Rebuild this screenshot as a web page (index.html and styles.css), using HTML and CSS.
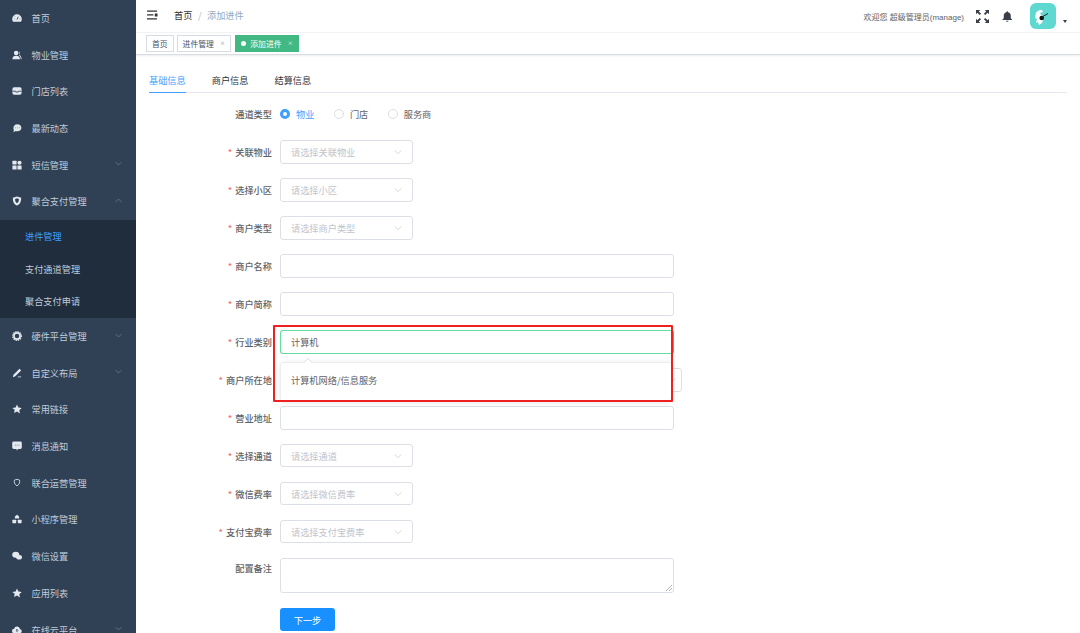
FILE: index.html
```html
<!DOCTYPE html>
<html lang="zh-CN">
<head>
<meta charset="utf-8">
<title>添加进件</title>
<link rel="stylesheet" href="styles.css">
</head>
<body>
<div class="app">
  <aside class="sidebar">
    <div class="menu-item"><svg class="ico" viewBox="0 0 24 24"><path d="M12 3A11.5 11.5 0 0 0 .5 14.500c0 2.300.7 4.500 1.900 6.500h19.200a12 12 0 0 0 1.900-6.500A11.500 11.500 0 0 0 12 3z"/><path class="cut" d="M12 16l3-7M5 14h1M18.500 14h1M8 8.500l.5.5"/></svg><span>首页</span></div>
    <div class="menu-item"><svg class="ico" viewBox="0 0 24 24"><circle cx="10" cy="7" r="5.500"/><path d="M1 22c0-6 3-8.500 9-8.500s9 2.500 9 8.500z"/><path d="M17 3c2 2 2 6 0 8 3 2 6 5 6 11h-2c0-5-2-8-4-9z"/></svg><span>物业管理</span></div>
    <div class="menu-item"><svg class="ico" viewBox="0 0 24 24"><rect x="1" y="3" width="22" height="18" rx="4"/><path class="cut" d="M1 12.500h8v2h6v-2h8"/></svg><span>门店列表</span></div>
    <div class="menu-item"><svg class="ico" viewBox="0 0 24 24"><path d="M13 3c5.500 0 9.500 3.600 9.500 8.500S18.500 20 13 20c-1.500 0-3-.2-4-.7L3.500 22l1-5A8.500 8.500 0 0 1 3.500 11.500C3.500 6.600 7.500 3 13 3z"/><path class="cut" d="M8 11.500h1M12.500 11.500h1M17 11.500h1"/></svg><span>最新动态</span></div>
    <div class="menu-item"><svg class="ico" viewBox="0 0 24 24"><rect x="1" y="2" width="10" height="9" rx="1"/><circle cx="18" cy="6.500" r="5"/><rect x="1" y="13" width="10" height="10" rx="1"/><rect x="13" y="13" width="10" height="10" rx="1"/></svg><span>短信管理</span><svg class="chev" viewBox="0 0 12 12"><path d="M1 3.500l5 5 5-5"/></svg></div>
    <div class="menu-item"><svg class="ico" viewBox="0 0 24 24"><path fill-rule="evenodd" d="M12 1l10 3c0 9-2 15-10 19C4 19 2 13 2 4zM12 6c-3 0-4.500 1-4.500 2.500 0 4 1.500 7 4.500 9 3-2 4.500-5 4.500-9C16.500 7 15 6 12 6z"/></svg><span>聚合支付管理</span><svg class="chev" viewBox="0 0 12 12"><path d="M1 8.500l5-5 5 5"/></svg></div>
    <div class="submenu">
      <div class="sub-item active">进件管理</div>
      <div class="sub-item">支付通道管理</div>
      <div class="sub-item">聚合支付申请</div>
    </div>
    <div class="menu-item"><svg class="ico" viewBox="0 0 24 24"><circle class="ring" cx="12" cy="12" r="7.500"/><circle class="teeth" cx="12" cy="12" r="10.500"/></svg><span>硬件平台管理</span><svg class="chev" viewBox="0 0 12 12"><path d="M1 3.500l5 5 5-5"/></svg></div>
    <div class="menu-item"><svg class="ico" viewBox="0 0 24 24"><path d="M18 2l4 4L8 20l-6 2 1.500-6zM14 22h8v-1.500h-8z"/></svg><span>自定义布局</span><svg class="chev" viewBox="0 0 12 12"><path d="M1 3.500l5 5 5-5"/></svg></div>
    <div class="menu-item"><svg class="ico" viewBox="0 0 24 24"><path d="M12 1l3.400 7.300 7.900 1-5.800 5.400 1.500 7.900L12 17.700l-7 3.900 1.500-7.900L.7 9.300l7.900-1z"/></svg><span>常用链接</span></div>
    <div class="menu-item"><svg class="ico" viewBox="0 0 24 24"><path d="M4 1h16a3.500 3.500 0 0 1 3.500 3.500v11A3.500 3.500 0 0 1 20 19h-5l-4 4v-4H4a3.500 3.500 0 0 1-3.500-3.500v-11A3.500 3.500 0 0 1 4 1z"/><path class="cut" d="M7 10h1.500M11.500 10H13M16 10h1.500"/></svg><span>消息通知</span></div>
    <div class="menu-item"><svg class="ico thin" viewBox="0 0 24 24"><path d="M6 5c4-2 8-2 12 0 1.500 5 0 10-6 14C6 15 4.500 10 6 5z"/></svg><span>联合运营管理</span></div>
    <div class="menu-item"><svg class="ico" viewBox="0 0 24 24"><path d="M12 2l5 4v5H7V6z"/><rect x="1" y="14" width="9" height="8" rx="1"/><rect x="14" y="14" width="9" height="8" rx="1"/></svg><span>小程序管理</span></div>
    <div class="menu-item"><svg class="ico" viewBox="0 0 24 24"><ellipse cx="9" cy="9" rx="8.500" ry="7"/><ellipse cx="17" cy="15" rx="7" ry="5.500"/></svg><span>微信设置</span></div>
    <div class="menu-item"><svg class="ico" viewBox="0 0 24 24"><path d="M12 1l3.400 7.300 7.900 1-5.800 5.400 1.500 7.900L12 17.700l-7 3.900 1.500-7.900L.7 9.300l7.900-1z"/></svg><span>应用列表</span></div>
    <div class="menu-item"><svg class="ico" viewBox="0 0 24 24"><path d="M6 20a5.500 5.500 0 0 1-.8-11A7 7 0 0 1 19 9.500 5.300 5.300 0 0 1 18.500 20z"/><path class="cut" d="M12 17v-6M9.500 13L12 10.500 14.500 13"/></svg><span>在线云平台</span><svg class="chev" viewBox="0 0 12 12"><path d="M1 3.500l5 5 5-5"/></svg></div>
  </aside>

  <main class="main">
    <header class="navbar">
      <svg class="hamburger" viewBox="0 0 12 11"><path d="M0 .5h11v1.300H0zM0 4.800h7v1.300H0zM0 9.100h11v1.300H0zM8.500 3.800h3v3.400h-3z"/></svg>
      <nav class="crumbs"><span class="crumb-home">首页</span><span class="crumb-sep">/</span><span class="crumb-current">添加进件</span></nav>
      <div class="nav-right">
        <span class="welcome">欢迎您 超级管理员(manage)</span>
        <svg class="fullscreen" viewBox="0 0 14 14"><path d="M0 0h4.500L3 1.500l2.500 2.500-1.500 1.500L1.500 3 0 4.500zM14 0v4.500L12.500 3 10 5.500 8.500 4 11 1.500 9.500 0zM0 14V9.500L1.500 11 4 8.500 5.500 10 3 12.500 4.500 14zM14 14H9.500l1.500-1.500L8.500 10 10 8.500l2.500 2.500L14 9.500z"/></svg>
        <svg class="bell" viewBox="0 0 12 12"><path d="M6 0c.6 0 1 .4 1 1 2 .5 3 2 3 4v3l1.500 1.500v.5H.5v-.5L2 8V5c0-2 1-3.500 3-4 0-.6.4-1 1-1zM4.500 10.800h3A1.500 1.500 0 0 1 6 12a1.500 1.500 0 0 1-1.500-1.200z"/></svg>
        <div class="avatar"><svg viewBox="0 0 26 26"><path class="ghost" d="M5.500 12c0-3 3-5.500 6.500-5l1 2-3 1 1 2 2 1v4l-1 3-3 2-1-3-2 1 1-4-2-1z"/><circle class="ink" cx="11.700" cy="15" r="2.300"/><path class="ink-line" d="M12 14l6-3.500"/></svg></div>
        <span class="caret"></span>
      </div>
    </header>

    <div class="tags">
      <span class="tag">首页</span>
      <span class="tag">进件管理<i class="tag-x">×</i></span>
      <span class="tag tag-active"><b class="tag-dot"></b>添加进件<i class="tag-x">×</i></span>
    </div>

    <section class="content">
      <div class="tabs">
        <span class="tab active">基础信息</span>
        <span class="tab">商户信息</span>
        <span class="tab">结算信息</span>
      </div>

      <form class="form">
        <div class="row">
          <label class="label">通道类型</label>
          <div class="radios">
            <span class="radio checked"><b class="dot"></b>物业</span>
            <span class="radio"><b class="dot"></b>门店</span>
            <span class="radio"><b class="dot"></b>服务商</span>
          </div>
        </div>
        <div class="row"><label class="label req">关联物业</label><div class="select"><span>请选择关联物业</span><svg class="select-chev" viewBox="0 0 12 12"><path d="M1 3.500l5 5 5-5"/></svg></div></div>
        <div class="row"><label class="label req">选择小区</label><div class="select"><span>请选择小区</span><svg class="select-chev" viewBox="0 0 12 12"><path d="M1 3.500l5 5 5-5"/></svg></div></div>
        <div class="row"><label class="label req">商户类型</label><div class="select"><span>请选择商户类型</span><svg class="select-chev" viewBox="0 0 12 12"><path d="M1 3.500l5 5 5-5"/></svg></div></div>
        <div class="row"><label class="label req">商户名称</label><div class="input"></div></div>
        <div class="row"><label class="label req">商户简称</label><div class="input"></div></div>
        <div class="row row-popover">
          <label class="label req">行业类别</label>
          <div class="input focused">计算机</div>
          <div class="popover"><span class="popover-arrow"></span>计算机网络/信息服务</div>
        </div>
        <div class="row"><label class="label req">商户所在地</label><div class="input wide"><svg class="select-chev" viewBox="0 0 12 12"><path d="M1 3.500l5 5 5-5"/></svg></div></div>
        <div class="row"><label class="label req">营业地址</label><div class="input"></div></div>
        <div class="row"><label class="label req">选择通道</label><div class="select"><span>请选择通道</span><svg class="select-chev" viewBox="0 0 12 12"><path d="M1 3.500l5 5 5-5"/></svg></div></div>
        <div class="row"><label class="label req">微信费率</label><div class="select"><span>请选择微信费率</span><svg class="select-chev" viewBox="0 0 12 12"><path d="M1 3.500l5 5 5-5"/></svg></div></div>
        <div class="row"><label class="label req">支付宝费率</label><div class="select"><span>请选择支付宝费率</span><svg class="select-chev" viewBox="0 0 12 12"><path d="M1 3.500l5 5 5-5"/></svg></div></div>
        <div class="row row-top"><label class="label">配置备注</label><div class="textarea"><svg class="resize" viewBox="0 0 6 6"><path d="M0 6l6-6M3 6l3-3"/></svg></div></div>
        <div class="row row-button"><button class="submit" type="button">下一步</button></div>
      </form>
    </section>
    <div class="annotation"></div>
  </main>
</div>
</body>
</html>
```
FILE: styles.css
```css
* { box-sizing: border-box; }
html, body { margin: 0; height: 100%; overflow: hidden; background: #fff; }
body { font-family: "Noto Sans CJK SC", "Liberation Sans", sans-serif; font-size: 9.2px; color: #606266; }

.app { display: flex; width: 1080px; height: 633px; overflow: hidden; }

/* sidebar */
.sidebar { flex: 0 0 136px; height: 633px; overflow: hidden; background: #304156; color: #bfcbd9; }
.menu-item { display: flex; align-items: center; height: 36.700px; padding-left: 11.500px; padding-bottom: 1px; position: relative; }
.ico { flex: 0 0 10px; width: 10px; height: 10px; margin-right: 10px; fill: #e4e9ef; }
.ico .cut { fill: none; stroke: #304156; stroke-width: 2; }
.ico .ring { fill: none; stroke: #e4e9ef; stroke-width: 4; }
.ico .teeth { fill: none; stroke: #e4e9ef; stroke-width: 3; stroke-dasharray: 3 2.500; }
.ico.thin { fill: none; stroke: #e4e9ef; stroke-width: 2; }
.chev { position: absolute; right: 14px; top: 50%; width: 7px; height: 7px; margin-top: -5px; fill: none; stroke: #7f8da0; stroke-width: 1; }
.submenu { background: #1f2d3d; }
.sub-item { display: flex; align-items: center; height: 32.700px; padding-left: 25px; padding-bottom: 1px; }
.sub-item.active { color: #409eff; }

/* main */
.main { flex: 1; min-width: 0; height: 633px; position: relative; display: flex; flex-direction: column; overflow: hidden; }
.navbar { flex: 0 0 33px; display: flex; align-items: center; padding-left: 11px; border-bottom: 1px solid #f3f4f5; }
.hamburger { width: 11px; height: 10px; fill: #303133; margin-right: 16px; margin-top: -2px; }
.crumbs { display: flex; gap: 4.500px; padding-bottom: 2px; }
.crumb-home { color: #303133; }
.crumb-sep { color: #b4b8bf; margin: 0 1px; }
.crumb-current { color: #97a8be; }
.nav-right { margin-left: auto; display: flex; align-items: center; padding-right: 13px; }
.welcome { font-family: "Liberation Sans", "Noto Sans CJK SC", sans-serif; font-size: 8px; color: #606266; margin-right: 12px; }
.fullscreen { width: 13px; height: 13px; fill: #3a3f47; margin-right: 13px; }
.bell { width: 10.500px; height: 11px; fill: #3a3f47; margin-right: 17.500px; }
.avatar { width: 26px; height: 26px; border-radius: 6px; background: #5fd8d2; }
.avatar svg { display: block; width: 26px; height: 26px; }
.ghost { fill: #fff; }
.ink { fill: #111; }
.ink-line { stroke: #222; stroke-width: 1; }
.caret { width: 0; height: 0; border: 2.500px solid transparent; border-top: 3px solid #3a3f47; border-bottom: 0; margin: 11px 0 0 7px; }

.tags { flex: 0 0 21.500px; display: flex; align-items: center; gap: 3px; padding-left: 10px; border-bottom: 1px solid #d8dce5; box-shadow: 0 1px 2px rgba(0, 0, 0, .08); font-size: 7.800px; color: #495060; }
.tag { display: inline-flex; align-items: center; height: 17.500px; padding: 0 5px; border: 1px solid #d8dce5; background: #fff; }
.tag-x { font-style: normal; font-size: 5.500px; color: #8d929b; margin-left: 6px; }
.tag-active { background: #42b983; border-color: #42b983; color: #fff; margin-left: 1px; padding: 0 5px; }
.tag-active .tag-x { color: #e6f6ee; margin-left: 6px; }
.tag-dot { width: 5px; height: 5px; border-radius: 50%; background: #fff; margin-right: 4px; }

/* content */
.content { flex: 1; min-height: 0; padding: 17.500px 13px 0; }
.tabs { display: flex; gap: 26px; height: 21px; border-bottom: 1.500px solid #e4e7ed; }
.tab { height: 21px; line-height: 16px; color: #303133; }
.tab.active { color: #409eff; border-bottom: 1.500px solid #409eff; }

.form { padding-top: 9.500px; display: flex; flex-direction: column; gap: 14.450px; }
.row { display: flex; align-items: center; gap: 8px; min-height: 23.500px; position: relative; }
.row-top { align-items: flex-start; }
.row-button { padding-left: 131px; margin-top: 0; }
.label { flex: 0 0 123px; text-align: right; font-weight: 500; color: #606266; }
.row-top .label { line-height: 20px; }
.label.req::before { content: "*"; color: #f56c6c; margin-right: 3px; }

.radios { display: flex; align-items: center; gap: 19.500px; }
.radio { display: inline-flex; align-items: center; gap: 6px; color: #606266; }
.dot { width: 10px; height: 10px; border-radius: 50%; border: 1px solid #dcdfe6; background: #fff; }
.radio.checked { color: #409eff; }
.radio.checked .dot { border: 3px solid #409eff; }

.select, .input, .textarea { border: 1px solid #dcdfe6; border-radius: 3px; background: #fff; }
.select { width: 133px; height: 23.500px; padding: 0 10px; display: flex; align-items: center; justify-content: space-between; color: #c0c4cc; }
.select-chev { width: 8px; height: 8px; fill: none; stroke: #c0c4cc; stroke-width: 1; flex: none; }
.input { width: 393.500px; height: 23.500px; padding: 0 10px; display: flex; align-items: center; color: #606266; }
.input.focused { border-color: #67dca0; border-right-color: #a39a4a; }
.input.wide { width: 402px; justify-content: flex-end; padding-right: 5px; }
.textarea { width: 393.500px; height: 35.500px; position: relative; }
.resize { position: absolute; right: 1px; bottom: 1px; width: 6px; height: 6px; fill: none; stroke: #8a8f98; stroke-width: .7; }

.popover { position: absolute; left: 131px; top: 31.500px; z-index: 2; width: 392px; height: 39px; padding: 0 0 3px 10px; display: flex; align-items: center; background: #fff; border: 1px solid #eceef2; border-radius: 3px; box-shadow: 0 1px 6px rgba(0, 0, 0, .1); color: #606266; }
.popover-arrow { position: absolute; left: 24px; top: -4px; width: 6px; height: 6px; background: #fff; border-left: 1px solid #e4e7ed; border-top: 1px solid #e4e7ed; transform: rotate(45deg); }

.submit { width: 55px; height: 23.700px; padding: 0; border: 0; border-radius: 3px; background: #1890ff; color: #fff; font: inherit; }

.annotation { position: absolute; left: 137px; top: 325px; width: 399.500px; height: 77px; z-index: 3; border: 2px solid #ee2020; border-radius: 1px; }
```
